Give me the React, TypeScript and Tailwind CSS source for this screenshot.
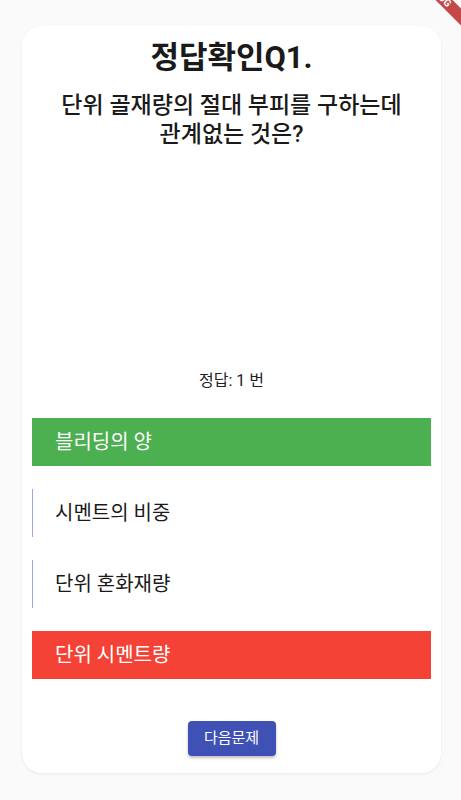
export default function App() {
  const options = [
    { text: "블리딩의 양", tone: "correct" },
    { text: "시멘트의 비중", tone: "plain" },
    { text: "단위 혼화재량", tone: "plain" },
    { text: "단위 시멘트량", tone: "wrong" },
  ];

  return (
    <div
      className="relative min-h-screen w-full overflow-hidden bg-[#fafafa] pl-[22px] pr-[20px] pt-[26px] pb-[27px]"
      style={{ fontFamily: 'Roboto, "Noto Sans CJK KR", sans-serif' }}
    >
      <div className="flex h-[747px] flex-col rounded-[20px] bg-white shadow-[0_1px_3px_rgba(0,0,0,0.08)]">
        <h1 className="mt-[13px] text-center text-[31px] font-bold leading-[38px] text-[#1a1a1a]">
          정답확인Q1.
        </h1>
        <p className="mt-[14px] px-2 text-center text-[23px] font-medium leading-[29px] text-[#1a1a1a]">
          단위 골재량의 절대 부피를 구하는데
          <br />
          관계없는 것은?
        </p>
        <div className="h-[222px]" />
        <p className="text-center text-[16px] leading-[20px] text-[#222]">정답: 1 번</p>

        <div className="mx-[10px] mt-[27px] flex flex-col gap-[23px]">
          {options.map((o) => (
            <div
              key={o.text}
              className={
                o.tone === "correct"
                  ? "flex h-[48px] items-center bg-[#4caf50] pl-[23px] text-[20px] text-white"
                  : o.tone === "wrong"
                    ? "flex h-[48px] items-center bg-[#f44336] pl-[23px] text-[20px] text-white"
                    : "flex h-[48px] items-center border-l border-[#9fa8da] pl-[22px] text-[20px] text-[#1a1a1a]"
              }
            >
              {o.text}
            </div>
          ))}
        </div>

        <div className="mt-[42px] flex justify-center">
          <button className="h-[35px] w-[88px] rounded-[4px] bg-[#3f51b5] text-[15px] text-white shadow-[0_2px_3px_rgba(0,0,0,0.25)]">
            다음문제
          </button>
        </div>
      </div>

      <div className="absolute left-[388px] top-[-12px] flex h-[12px] w-[100px] rotate-45 items-center justify-center bg-[#b71c1c]/80 text-[10px] font-bold leading-none tracking-wide text-white">
        DEBUG
      </div>
    </div>
  );
}
